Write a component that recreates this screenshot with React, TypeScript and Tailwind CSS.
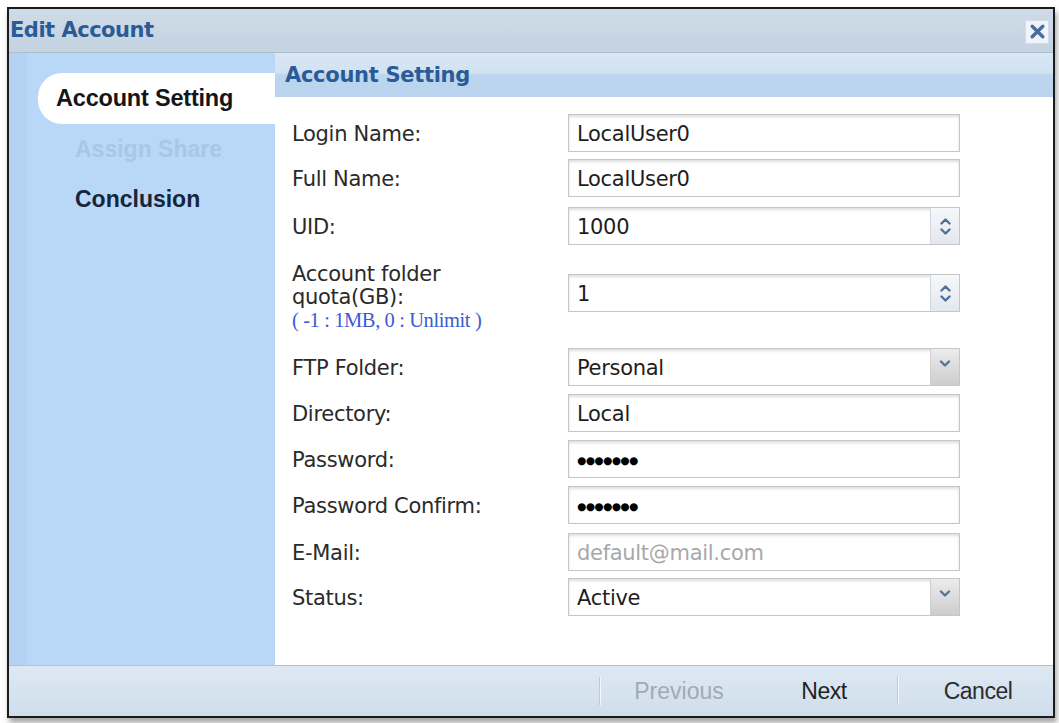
import React from 'react';

const sans = "font-['DejaVu_Sans',sans-serif]";
const helv = "font-['Liberation_Sans',Arial,sans-serif]";

function ChevronUp({ className = '' }: { className?: string }) {
  return (
    <svg viewBox="0 0 12 8" className={className} fill="none" stroke="currentColor" strokeWidth="2.4" strokeLinecap="round" strokeLinejoin="round">
      <path d="M2 6.5 6 2.5 10 6.5" />
    </svg>
  );
}

function ChevronDown({ className = '' }: { className?: string }) {
  return (
    <svg viewBox="0 0 12 8" className={className} fill="none" stroke="currentColor" strokeWidth="2.4" strokeLinecap="round" strokeLinejoin="round">
      <path d="M2 1.5 6 5.5 10 1.5" />
    </svg>
  );
}

function Field({ value, kind = 'text', muted = false }: { value: string; kind?: 'text' | 'spin' | 'select' | 'password'; muted?: boolean }) {
  return (
    <div className="flex h-[38px] w-[392px] border border-[#c6c6c6] bg-white shadow-[inset_0_2px_3px_rgba(0,0,0,0.13)]">
      <div
        className={`flex flex-1 items-center pl-[8px] ${kind === 'password' ? 'pt-[3px] text-[10.5px] tracking-[-0.5px] text-black' : 'pt-[3px] text-[21px] tracking-[-0.3px]'} ${muted ? 'text-[#a8a8a8]' : 'text-[#1e1e1e]'} ${sans}`}
      >
        {value}
      </div>
      {kind === 'spin' && (
        <div className="flex w-[29px] flex-col items-center justify-center gap-[3px] border-l border-[#d4d8dc] bg-[linear-gradient(to_bottom,#f6f8fa,#e3e8ee)] text-[#4f6f98]">
          <ChevronUp className="h-[8px] w-[13px]" />
          <ChevronDown className="h-[8px] w-[13px]" />
        </div>
      )}
      {kind === 'select' && (
        <div className="flex w-[29px] items-center justify-center border-l border-[#cfcfcf] bg-[linear-gradient(to_bottom,#ececec,#cdcdcd)] pb-[6px] text-[#56739a]">
          <ChevronDown className="h-[8px] w-[12px]" />
        </div>
      )}
    </div>
  );
}

function Row({ label, children, className = '' }: { label: React.ReactNode; children: React.ReactNode; className?: string }) {
  return (
    <div className={`flex items-center ${className}`}>
      <div className={`w-[276px] pt-[3px] text-[21px] tracking-[-0.3px] text-[#2a2a2a] ${sans}`}>{label}</div>
      {children}
    </div>
  );
}

export default function App() {
  return (
    <div className="h-[723px] w-[1059px] bg-white pl-[7px] pt-[7px]">
      <div className="flex h-[711px] w-[1048px] flex-col border-2 border-[#1b1b1b] shadow-[2px_5px_6px_rgba(0,0,0,0.35)]">
        {/* title bar */}
        <div className="flex h-[44px] items-center justify-between border-b border-[#aebdcc] bg-[linear-gradient(to_bottom,#cfdbe7,#c4d3e1)] pl-[1px] pr-[4px]">
          <span className={`text-[21px] font-bold tracking-[-0.5px] text-[#2b5b96] ${sans}`}>Edit Account</span>
          <div className="mt-[2px] flex h-[24px] w-[24px] items-center justify-center border border-[#d3dbe4] bg-[#f1f4f8] text-[#4b6d9d]">
            <svg viewBox="0 0 16 16" className="h-[17px] w-[17px]" fill="none" stroke="currentColor" strokeWidth="3.2" strokeLinecap="round">
              <path d="M3 3l10 10M13 3L3 13" />
            </svg>
          </div>
        </div>

        <div className="flex h-[612px]">
          {/* sidebar */}
          <div className="w-[266px] border-l-[18px] border-[#b5d2f4] bg-[#b9d7f7]">
            <div className="mt-[20px] ml-[11px] flex h-[51px] items-center rounded-l-[24px] bg-white pl-[18px]">
              <span className={`text-[23.5px] font-bold tracking-[-0.2px] text-[#161616] ${helv}`}>Account Setting</span>
            </div>
            <div className={`flex h-[50px] items-center pl-[48px] text-[23px] font-bold text-[#a9c6e7] ${helv}`}>Assign Share</div>
            <div className={`flex h-[50px] items-center pl-[48px] text-[23px] font-bold text-[#17253a] ${helv}`}>Conclusion</div>
          </div>

          {/* content */}
          <div className="flex flex-1 flex-col bg-white">
            <div className="flex h-[44px] items-center bg-[linear-gradient(to_bottom,#dae7f4_0%,#d2e2f1_45%,#bdd6ef_50%,#b9d3ee_100%)] pl-[10px] pt-[2px]">
              <span className={`text-[21px] font-bold tracking-[-0.3px] text-[#2b5b96] ${sans}`}>Account Setting</span>
            </div>

            <div className="flex flex-col pl-[17px]">
              <Row label="Login Name:" className="mt-[17px]">
                <Field value="LocalUser0" />
              </Row>
              <Row label="Full Name:" className="mt-[7px]">
                <Field value="LocalUser0" />
              </Row>
              <Row label="UID:" className="mt-[10px]">
                <Field value="1000" kind="spin" />
              </Row>
              <Row
                className="mt-[10px] h-[76px]"
                label={
                  <div className="flex flex-col pt-[4px] leading-[23px]">
                    <span>Account folder</span>
                    <span>quota(GB):</span>
                    <span className="font-['Liberation_Serif',serif] text-[20.5px] leading-[22px] tracking-[-0.4px] text-[#3d5bd0]">( -1 : 1MB, 0 : Unlimit )</span>
                  </div>
                }
              >
                <Field value="1" kind="spin" />
              </Row>
              <Row label="FTP Folder:" className="mt-[17px]">
                <Field value="Personal" kind="select" />
              </Row>
              <Row label="Directory:" className="mt-[8px]">
                <Field value="Local" />
              </Row>
              <Row label="Password:" className="mt-[8px]">
                <Field value="●●●●●●●" kind="password" />
              </Row>
              <Row label="Password Confirm:" className="mt-[8px]">
                <Field value="●●●●●●●" kind="password" />
              </Row>
              <Row label="E-Mail:" className="mt-[9px]">
                <Field value="default@mail.com" muted />
              </Row>
              <Row label="Status:" className="mt-[7px]">
                <Field value="Active" kind="select" />
              </Row>
            </div>
          </div>
        </div>

        {/* footer */}
        <div className={`flex h-[51px] items-center justify-end border-t border-[#aac3db] bg-[linear-gradient(to_bottom,#dde8f2,#cfdeec)] text-[23px] ${helv}`}>
          <div className="h-[28px] w-[2px] border-l border-[#b5cbe0] bg-white/70" />
          <div className="flex w-[150px] justify-center pl-[6px] text-[#a1aab4]">Previous</div>
          <div className="flex w-[146px] justify-center tracking-[-0.5px] text-[#1f1f1f]">Next</div>
          <div className="h-[28px] w-[2px] border-l border-[#b5cbe0] bg-white/70" />
          <div className="flex w-[154px] justify-center pl-[4px] tracking-[-0.5px] text-[#2d2d2d]">Cancel</div>
        </div>
      </div>
    </div>
  );
}
